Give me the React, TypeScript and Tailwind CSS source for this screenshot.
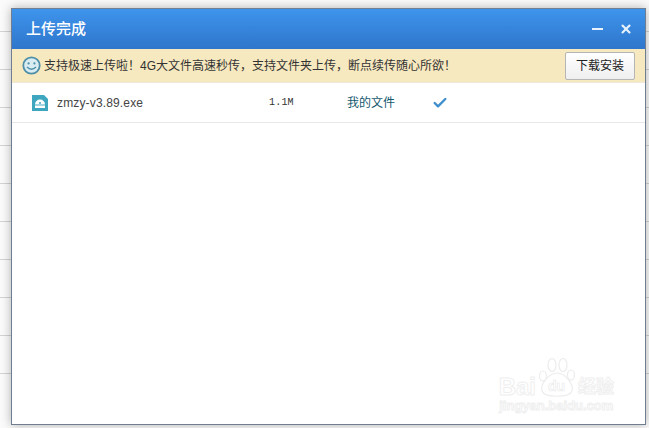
import { Check, X } from "lucide-react";

const cjk = "font-['Liberation_Sans','Noto_Sans_CJK_SC',sans-serif]";

function Smiley() {
  return (
    <svg width="19" height="19" viewBox="0 0 19 19" className="shrink-0">
      <circle cx="9.5" cy="9.5" r="8.2" fill="#d9ecf2" stroke="#4f8fa8" strokeWidth="1.8" />
      <circle cx="6.6" cy="7.4" r="1.1" fill="#4f8fa8" />
      <circle cx="12.4" cy="7.4" r="1.1" fill="#4f8fa8" />
      <path d="M5 11 Q9.5 15.5 14 11" fill="none" stroke="#4f8fa8" strokeWidth="1.4" />
    </svg>
  );
}

function FileIcon() {
  return (
    <svg width="16" height="16" viewBox="0 0 16 16" className="shrink-0">
      <path d="M0 0H12L16 4V16H0Z" fill="#3fa6c0" />
      <path d="M3 9.5A5 5 0 0 1 13 9.5Z" fill="#fff" />
      <rect x="3" y="10.5" width="10" height="2.5" fill="#fff" />
      <circle cx="8" cy="8" r="1" fill="#3fa6c0" />
    </svg>
  );
}

function Watermark() {
  return (
    <div className="absolute right-[31px] bottom-[11px] flex flex-col items-center text-white [-webkit-text-stroke:1px_#efefef]">
      <div className="flex items-end">
        <span className="font-['Liberation_Sans',sans-serif] text-[24px] leading-[20px] font-bold">Bai</span>
        <svg width="38" height="40" viewBox="0 0 38 40" className="mx-[2px]">
          <g fill="#fff" stroke="#ececec" strokeWidth="1.2">
            <ellipse cx="5" cy="19" rx="3.5" ry="5" />
            <ellipse cx="14" cy="8" rx="4" ry="6.5" />
            <ellipse cx="25" cy="8" rx="4" ry="6.5" />
            <ellipse cx="33" cy="18" rx="3.5" ry="5" />
            <path d="M19 16C11 16 2 27 4 34C7 41 31 41 34 34C36 27 27 16 19 16Z" />
          </g>
          <text x="10" y="34" fontSize="14" fontWeight="700" fill="#fff" stroke="#ececec" strokeWidth="0.7" fontFamily="Liberation Sans">du</text>
        </svg>
        <span className={`${cjk} text-[18px] leading-[20px] font-bold`}>经验</span>
      </div>
      <span className="mt-[2px] font-['Liberation_Sans',sans-serif] text-[13px] leading-[14px] font-bold">jingyan.baidu.com</span>
    </div>
  );
}

export default function App() {
  return (
    <div className="relative h-[428px] w-[649px] overflow-hidden bg-[#fbfbfb]">
      <div>
        {[32, 38, 38, 38, 38, 38, 38, 38, 38, 38].map((h, i) => (
          <div key={i} className="border-b border-[#d4d4d4]" style={{ height: h }} />
        ))}
      </div>

      <div className="absolute top-[8px] left-[11px] flex h-[417px] w-[635px] flex-col border border-[#6f7f8f] bg-white shadow-[0_0_10px_rgba(0,0,0,0.3)]">
        <div className="flex h-[40px] shrink-0 items-center justify-between bg-gradient-to-b from-[#3e94ec] to-[#2f76cc] pr-[12px] pl-[14px]">
          <span className={`${cjk} text-[15px] font-medium text-white`}>上传完成</span>
          <div className="flex items-center gap-[16px] text-[#e8f2fc]">
            <div className="h-[2px] w-[11px] bg-[#e8f2fc]" />
            <X size={14} strokeWidth={3.6} />
          </div>
        </div>

        <div className="flex h-[34px] shrink-0 items-center justify-between border-b border-[#eee9d8] bg-[#f7e9bf] pr-[10px] pl-[10px]">
          <div className={`${cjk} flex items-center gap-[3px] text-[12px] text-[#333]`}>
            <Smiley />
            <span>支持极速上传啦！4G大文件高速秒传，支持文件夹上传，断点续传随心所欲！</span>
          </div>
          <button className={`${cjk} h-[28px] w-[70px] rounded-[2px] border border-[#b5b5b5] bg-gradient-to-b from-white to-[#efefef] text-[12px] text-[#222]`}>
            下载安装
          </button>
        </div>

        <div className="flex h-[40px] shrink-0 items-center border-b border-[#e8e8e8] pl-[20px] text-[12px]">
          <FileIcon />
          <span className="ml-[9px] w-[212px] font-['Liberation_Sans',sans-serif] tracking-[0.15px] text-[#444]">zmzy-v3.89.exe</span>
          <span className="w-[78px] font-['Liberation_Mono',monospace] text-[10px] tracking-[0.2px] text-[#333]">1.1M</span>
          <span className={`${cjk} w-[85px] text-[#14596e]`}>我的文件</span>
          <Check size={16} strokeWidth={3.6} className="text-[#3f8fcf]" />
        </div>

        <div className="relative flex-1">
          <Watermark />
        </div>
      </div>
    </div>
  );
}
